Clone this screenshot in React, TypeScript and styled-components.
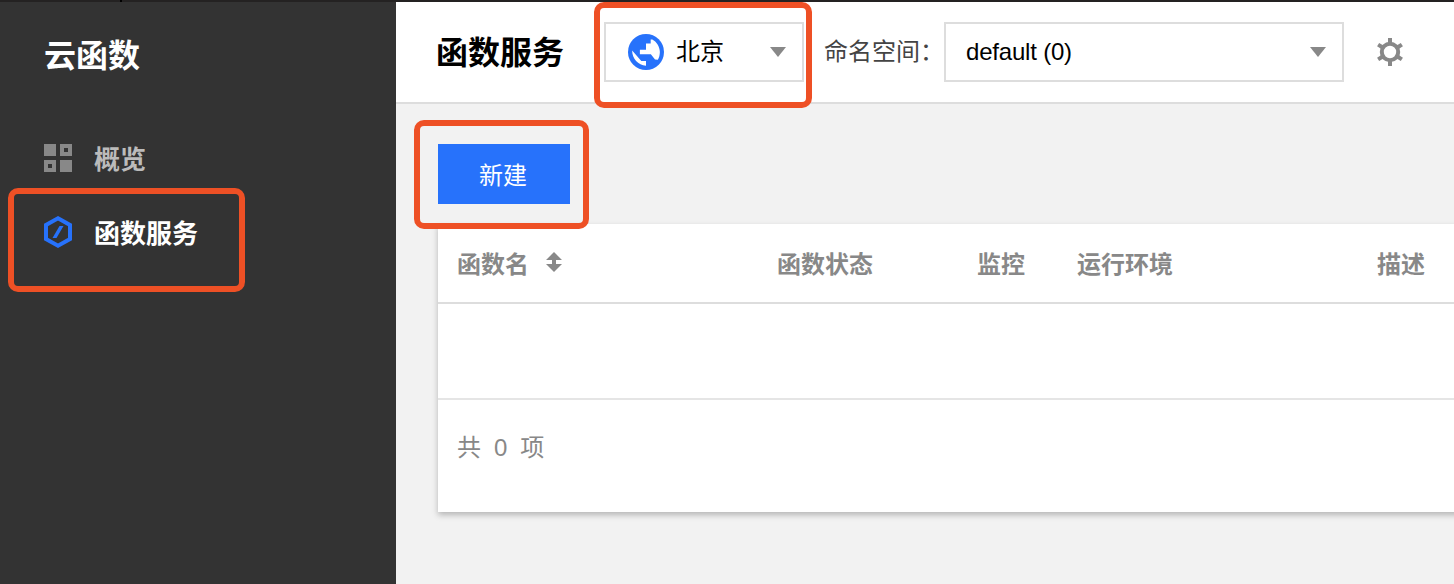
import React from "react";
import styled, { createGlobalStyle } from "styled-components";

const GlobalStyle = createGlobalStyle`
  * { box-sizing: border-box; }
  body {
    margin: 0;
    overflow: hidden;
    font-family: "Liberation Sans", "Noto Sans CJK SC", sans-serif;
    font-size: 24px;
    color: #000;
  }
`;

const Page = styled.div`
  height: 584px;
  overflow: hidden;
  background: #f2f2f2;
`;

const TopEdge = styled.div`
  height: 2px;
  background: linear-gradient(to right, #242222 120px, #000 120px, #000 122px, #242222 122px);
`;

const Columns = styled.div`
  display: flex;
  height: 582px;
`;

const Sidebar = styled.aside`
  flex: 0 0 396px;
  background: #333;
`;

const Brand = styled.h1`
  margin: 0;
  padding: 30px 0 0 44px;
  font-size: 32px;
  line-height: 48px;
  color: #fff;
`;

const Menu = styled.nav`
  display: flex;
  flex-direction: column;
  padding-top: 40px;
`;

const MenuItem = styled.a<{ $active?: boolean }>`
  position: relative;
  display: flex;
  align-items: center;
  gap: 21px;
  height: 74px;
  padding-left: 43px;
  font-size: 26px;
  font-weight: 700;
  color: ${(p) => (p.$active ? "#fff" : "#bbb")};

  svg {
    margin-top: 2px;
  }
`;

const Highlight = styled.span<{ $inset: string }>`
  position: absolute;
  inset: ${(p) => p.$inset};
  border: 6px solid #ee5025;
  border-radius: 10px;
  pointer-events: none;
  z-index: 2;
`;

const Main = styled.main`
  flex: 1;
  min-width: 0;
  display: flex;
  flex-direction: column;
`;

const Header = styled.header`
  flex: 0 0 102px;
  display: flex;
  align-items: center;
  padding-left: 40px;
  background: #fff;
  border-bottom: 2px solid #ddd;
`;

const Title = styled.h2`
  margin: 0;
  width: 168px;
  padding-top: 2px;
  font-size: 32px;
  line-height: 48px;
`;

const Select = styled.div<{ $width: number; $pad: number }>`
  position: relative;
  display: flex;
  align-items: center;
  width: ${(p) => p.$width}px;
  height: 60px;
  padding: 0 16px 0 ${(p) => p.$pad}px;
  border: 2px solid #ddd;
  background: #fff;
`;

const SelectText = styled.span<{ $tight?: boolean }>`
  flex: 1;
  line-height: 36px;
  letter-spacing: ${(p) => (p.$tight ? "-0.2px" : "0")};
`;

const Label = styled.label`
  width: 120px;
  margin-left: 20px;
  line-height: 36px;
  color: #444;
  white-space: nowrap;
`;

const Body = styled.section`
  display: flex;
  flex-direction: column;
  align-items: flex-start;
  gap: 20px;
  padding: 40px 0 0 42px;
`;

const CreateButton = styled.button`
  position: relative;
  width: 132px;
  height: 60px;
  padding: 0 2px 2px 0;
  border: 0;
  background: #2772fb;
  color: #fff;
  font: inherit;
`;

const Card = styled.div`
  align-self: stretch;
  height: 288px;
  margin-right: -20px;
  background: #fff;
  box-shadow: 0 3px 6px rgba(0, 0, 0, 0.25);
`;

const HeadRow = styled.div`
  display: grid;
  grid-template-columns: 320px 200px 100px 300px auto;
  align-items: center;
  height: 80px;
  padding: 0 0 2px 19px;
  border-bottom: 2px solid #ddd;
  font-weight: 700;
  color: #888;
`;

const HeadCell = styled.div`
  display: flex;
  align-items: center;
  gap: 17px;
  white-space: nowrap;
`;

const EmptyRow = styled.div`
  height: 96px;
  border-bottom: 2px solid #e5e5e5;
`;

const Total = styled.div`
  display: flex;
  gap: 13px;
  padding: 30px 19px;
  line-height: 36px;
  color: #888;
`;

const OverviewIcon = () => (
  <svg width="30" height="32" viewBox="0 0 30 32" fill="#888">
    <path d="M1 2h12v12H1zM17 18h12v12H17z" />
    <path fillRule="evenodd" d="M17 2h12v12H17zM21 6v4h4V6zM1 18h12v12H1zM5 22v4h4v-4z" />
  </svg>
);

const FunctionIcon = () => (
  <svg width="30" height="32" viewBox="0 0 30 32">
    <path d="M15 2.3 27 9v14l-12 6.7L3 23V9z" fill="none" stroke="#2772fb" strokeWidth="4" />
    <path d="M16.5 10h4l-7 12h-4z" fill="#2772fb" />
  </svg>
);

const GlobeSvg = styled.svg`
  margin-right: 12px;
`;

const GlobeIcon = () => (
  <GlobeSvg width="36" height="36" viewBox="2 2 20 20">
    <circle cx="12" cy="12" r="10" fill="#2772fb" />
    <path
      fill="#fff"
      d="M12 19.6C7.6 19.4 4.3 15.8 4.3 11.2L9.4 17H12zM18.6 16.3 17 16.2 14.7 13.2H8.6v-2.5H12V7.3h2.6V5h.9c2.3 1.2 4.2 4 4.2 7 0 1.6-.4 3.1-1.1 4.3z"
    />
  </GlobeSvg>
);

const Caret = () => (
  <svg width="16" height="10" viewBox="0 0 16 10">
    <path d="M0 0h16L8 10z" fill="#888" />
  </svg>
);

const SortIcon = () => (
  <svg width="16" height="20" viewBox="0 0 16 20" fill="#888">
    <path d="M8 0l8 8h-6v4h6l-8 8-8-8h6V8H0z" />
  </svg>
);

const GearSvg = styled.svg`
  margin-left: 32px;
`;

const GearIcon = () => (
  <GearSvg width="28" height="28" viewBox="-14 -14 28 28" stroke="#888" fill="none">
    <circle r="8.2" strokeWidth="4" />
    {[0, 58, 122, 180, 238, 302].map((angle) => (
      <path key={angle} d="M0-9V-14" strokeWidth="4" transform={`rotate(${angle})`} />
    ))}
  </GearSvg>
);

const columns = ["函数名", "函数状态", "监控", "运行环境", "描述"];

export default function App() {
  return (
    <>
      <GlobalStyle />
      <Page>
        <TopEdge />
        <Columns>
          <Sidebar>
            <Brand>云函数</Brand>
            <Menu>
              <MenuItem>
                <OverviewIcon />
                概览
              </MenuItem>
              <MenuItem $active>
                <FunctionIcon />
                函数服务
                <Highlight $inset="-6px 151px -24px 8px" />
              </MenuItem>
            </Menu>
          </Sidebar>
          <Main>
            <Header>
              <Title>函数服务</Title>
              <Select $width={200} $pad={22}>
                <GlobeIcon />
                <SelectText>北京</SelectText>
                <Caret />
                <Highlight $inset="-22px -10px -28px -12px" />
              </Select>
              <Label>命名空间：</Label>
              <Select $width={400} $pad={20}>
                <SelectText $tight>default (0)</SelectText>
                <Caret />
              </Select>
              <GearIcon />
            </Header>
            <Body>
              <CreateButton>
                新建
                <Highlight $inset="-24px -19px -25px -24px" />
              </CreateButton>
              <Card>
                <HeadRow>
                  {columns.map((name, i) => (
                    <HeadCell key={name}>
                      {name}
                      {i === 0 && <SortIcon />}
                    </HeadCell>
                  ))}
                </HeadRow>
                <EmptyRow />
                <Total>
                  <span>共</span>
                  <span>0</span>
                  <span>项</span>
                </Total>
              </Card>
            </Body>
          </Main>
        </Columns>
      </Page>
    </>
  );
}
